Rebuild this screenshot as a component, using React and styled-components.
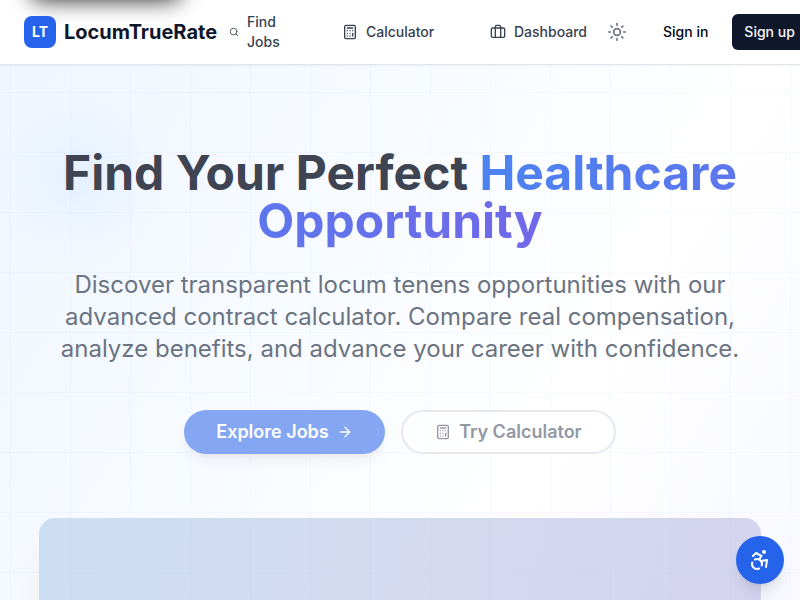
import React from 'react';
import styled, { createGlobalStyle } from 'styled-components';
import { Search, Calculator, Briefcase, Sun, ArrowRight, Accessibility } from 'lucide-react';

const GlobalStyle = createGlobalStyle`
  *, *::before, *::after { box-sizing: border-box; }
  html, body { margin: 0; height: 100%; overflow: hidden; }
  body { font-family: Inter, "Liberation Sans", sans-serif; color: #0f172a; line-height: 1.5; }
  h1, p { margin: 0; }
  button, a { font: inherit; text-decoration: none; }
`;

const Page = styled.div`
  display: flex;
  flex-direction: column;
  height: 600px;
  overflow: hidden;
`;

const SkipLink = styled.a`
  position: absolute;
  z-index: -1;
  left: 32px;
  top: -46px;
  width: 148px;
  height: 40px;
  border-radius: 8px;
  background: #2563eb;
  box-shadow: 0 5px 22px 1px rgba(0, 0, 0, 0.85);
`;

const Header = styled.header`
  position: relative;
  z-index: 2;
  display: flex;
  align-items: center;
  flex: none;
  height: 65px;
  padding: 0 24px;
  background: #fff;
  border-bottom: 1px solid #e2e5eb;
  box-shadow: 0 1px 2px rgba(0, 0, 0, 0.05);
`;

const Brand = styled.a`
  display: flex;
  align-items: center;
  gap: 8px;
  flex: none;
  width: 193px;
  color: #0f172a;
  font-size: 20px;
  font-weight: 700;
  line-height: 28px;
`;

const LogoMark = styled.span`
  display: grid;
  place-items: center;
  flex: none;
  width: 32px;
  height: 32px;
  border-radius: 8px;
  background: #2563eb;
  color: #fff;
  font-size: 14px;
`;

const Nav = styled.nav`
  display: flex;
  align-items: center;
  flex: none;
`;

const NavLink = styled.a`
  display: flex;
  align-items: center;
  flex: none;
  gap: 8px;
  width: ${(p) => p.$width}px;
  margin-left: ${(p) => p.$space}px;
  color: #374151;
  font-size: 14px;
  font-weight: 500;
  line-height: 20px;
  svg { flex: none; }
`;

const ThemeButton = styled.button`
  display: grid;
  place-items: center;
  flex: none;
  width: 36px;
  height: 36px;
  margin-left: 12px;
  padding: 0;
  border: 0;
  background: none;
  color: #6b7280;
`;

const AuthButton = styled.button`
  flex: none;
  height: 36px;
  padding: 0 12px;
  margin-left: ${(p) => p.$space}px;
  border: 0;
  border-radius: 6px;
  white-space: nowrap;
  font-size: 14px;
  font-weight: 500;
  line-height: 20px;
  color: ${(p) => (p.$solid ? '#f8fafc' : '#020817')};
  background: ${(p) => (p.$solid ? '#0f172a' : 'transparent')};
`;

const Hero = styled.main`
  position: relative;
  flex: none;
  display: flex;
  flex-direction: column;
  align-items: center;
  height: 1340px;
  padding: 84px 39px 0;
  background:
    linear-gradient(to right, rgba(59, 130, 246, 0.04) 1px, transparent 1px) 10px 0 / 60px 60px,
    linear-gradient(to bottom, rgba(59, 130, 246, 0.04) 1px, transparent 1px) 0 27px / 60px 60px,
    radial-gradient(circle at 80px 112px, rgba(191, 219, 254, 0.25), rgba(191, 219, 254, 0.15) 35px, rgba(191, 219, 254, 0.04) 70px, transparent 95px),
    linear-gradient(to bottom right, #eff6ff, #fff 48%, #f8f9ff 72%);
`;

const Title = styled.h1`
  color: #3e4452;
  font-size: 48px;
  font-weight: 700;
  line-height: 48px;
  text-align: center;
`;

const Accent = styled.span`
  color: transparent;
  background: linear-gradient(to right, #4b83f1, #7268e9);
  background-clip: text;
  -webkit-background-clip: text;
`;

const Lead = styled.p`
  width: 720px;
  margin-top: 24px;
  color: #6b7482;
  font-size: 24px;
  line-height: 32px;
  text-align: center;
`;

const Actions = styled.div`
  display: flex;
  gap: 16px;
  margin-top: 45px;
`;

const ActionButton = styled.button`
  display: flex;
  align-items: center;
  justify-content: center;
  gap: 8px;
  width: ${(p) => (p.$primary ? 201 : 215)}px;
  height: 44px;
  padding: 0;
  border-radius: 22px;
  white-space: nowrap;
  font-size: 18px;
  font-weight: 600;
  line-height: 28px;
  border: ${(p) => (p.$primary ? '0' : '2px solid #e5e8ee')};
  color: ${(p) => (p.$primary ? '#fff' : '#9299a4')};
  background: ${(p) => (p.$primary ? '#85a7f3' : 'rgba(255, 255, 255, 0.6)')};
  box-shadow: ${(p) => (p.$primary ? '0 10px 15px -3px rgba(0,0,0,.06), 0 4px 6px -4px rgba(0,0,0,.06)' : 'none')};
`;

const Preview = styled.section`
  flex: none;
  width: 722px;
  height: 400px;
  margin-top: 63.5px;
  border-radius: 16px;
  background:
    linear-gradient(to right, rgba(59, 130, 246, 0.03) 1px, transparent 1px) 31px 0 / 60px 60px,
    linear-gradient(to bottom, rgba(59, 130, 246, 0.03) 1px, transparent 1px) 0 54.5px / 60px 60px,
    linear-gradient(110deg, #ccdef3, #d5d9f0 50%, #d5d2f0);
  box-shadow: 0 25px 50px -12px rgba(0, 0, 0, 0.08);
`;

const AccessButton = styled.button`
  position: fixed;
  z-index: 4;
  right: 16px;
  bottom: 16px;
  display: grid;
  place-items: center;
  width: 48px;
  height: 48px;
  padding: 0;
  border: 0;
  border-radius: 50%;
  color: #fff;
  background: #2563eb;
  box-shadow: 0 10px 15px -3px rgba(0, 0, 0, 0.1), 0 4px 6px -4px rgba(0, 0, 0, 0.1);
`;

export default function App() {
  return (
    <Page>
      <GlobalStyle />
      <Header>
        <SkipLink href="#main" aria-label="Skip to content" />
        <Brand href="#"><LogoMark>LT</LogoMark>LocumTrueRate</Brand>
        <Nav>
          <NavLink href="#" $space={12} $width={58}><Search size={10} />Find Jobs</NavLink>
          <NavLink href="#" $space={55} $width={92}><Calculator size={16} />Calculator</NavLink>
          <NavLink href="#" $space={56} $width={97}><Briefcase size={16} />Dashboard</NavLink>
        </Nav>
        <ThemeButton aria-label="Theme"><Sun size={20} /></ThemeButton>
        <AuthButton $space={16}>Sign in</AuthButton>
        <AuthButton $space={12} $solid>Sign up</AuthButton>
      </Header>
      <Hero id="main">
        <Title>Find Your Perfect <Accent>Healthcare Opportunity</Accent></Title>
        <Lead>
          Discover transparent locum tenens opportunities with our advanced contract
          calculator. Compare real compensation, analyze benefits, and advance your career
          with confidence.
        </Lead>
        <Actions>
          <ActionButton $primary>Explore Jobs<ArrowRight size={16} /></ActionButton>
          <ActionButton><Calculator size={16} />Try Calculator</ActionButton>
        </Actions>
        <Preview />
      </Hero>
      <AccessButton aria-label="Accessibility"><Accessibility size={24} /></AccessButton>
    </Page>
  );
}
